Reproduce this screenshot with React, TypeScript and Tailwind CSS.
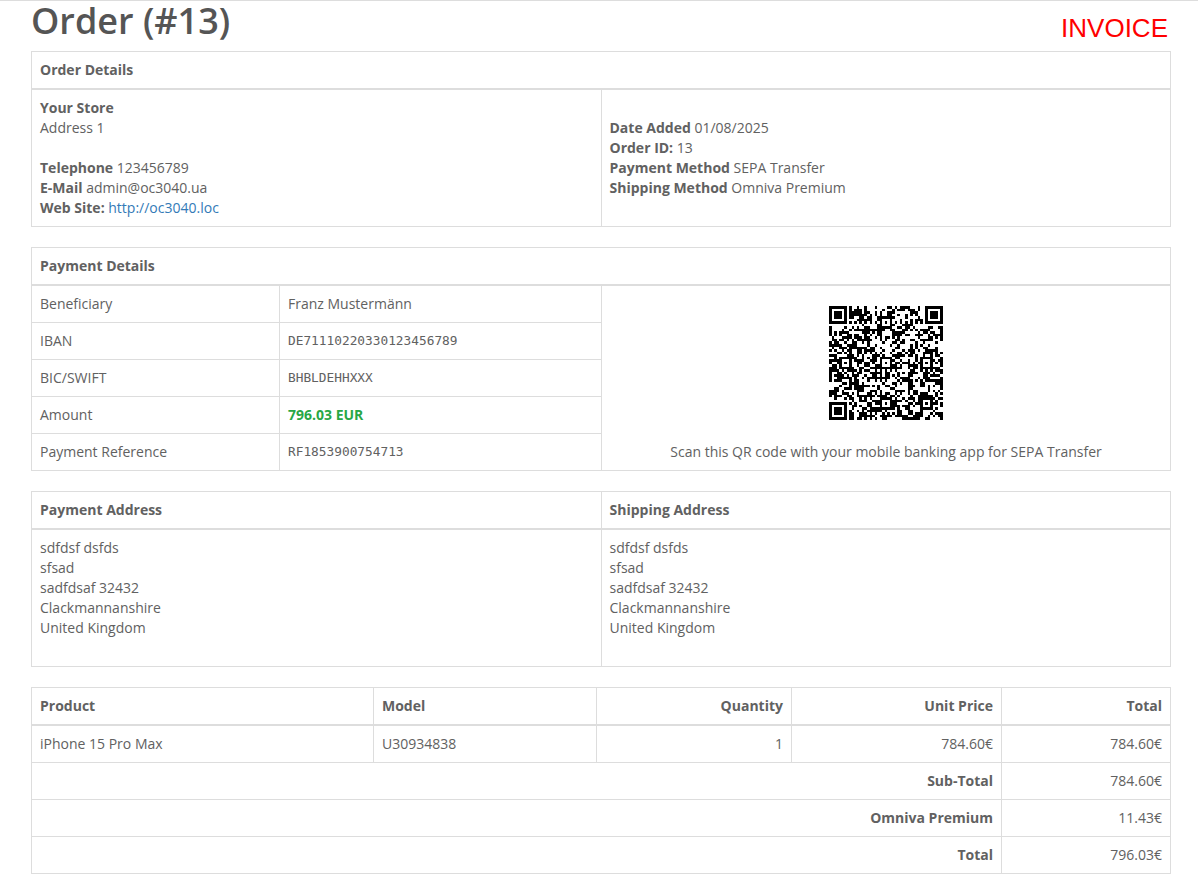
const SIZE = 45;

// Scannable look only: finder, timing and alignment patterns are real, the data area is filler
function buildQr() {
  const grid: boolean[][] = [];
  let seed = 20250108;
  for (let y = 0; y < SIZE; y++) {
    const row: boolean[] = [];
    for (let x = 0; x < SIZE; x++) {
      seed = (seed * 1664525 + 1013904223) >>> 0;
      row.push((seed >>> 16) % 100 < 50);
    }
    grid.push(row);
  }
  const finder = (ox: number, oy: number) => {
    for (let y = -1; y < 8; y++) {
      for (let x = -1; x < 8; x++) {
        const px = ox + x;
        const py = oy + y;
        if (px < 0 || py < 0 || px >= SIZE || py >= SIZE) continue;
        const inside = x >= 0 && x <= 6 && y >= 0 && y <= 6;
        const ring = x === 0 || x === 6 || y === 0 || y === 6;
        const core = x >= 2 && x <= 4 && y >= 2 && y <= 4;
        grid[py][px] = inside && (ring || core);
      }
    }
  };
  finder(0, 0);
  finder(SIZE - 7, 0);
  finder(0, SIZE - 7);
  for (let i = 8; i < SIZE - 8; i++) {
    grid[6][i] = i % 2 === 0;
    grid[i][6] = i % 2 === 0;
  }
  const centers = [6, 22, 38];
  for (const cy of centers) {
    for (const cx of centers) {
      if ((cx === 6 && cy === 6) || (cx === 38 && cy === 6) || (cx === 6 && cy === 38)) continue;
      for (let y = -2; y <= 2; y++) {
        for (let x = -2; x <= 2; x++) {
          grid[cy + y][cx + x] = Math.max(Math.abs(x), Math.abs(y)) !== 1;
        }
      }
    }
  }
  let d = "";
  grid.forEach((row, y) =>
    row.forEach((on, x) => {
      if (on) d += `M${x} ${y}h1v1h-1z`;
    })
  );
  return d;
}

const qrPath = buildQr();

const cell = "border border-[#ddd] p-2 align-top";
const head = "border border-[#ddd] border-b-2 p-2 align-top font-bold text-left";
const mono = "font-['DejaVu_Sans_Mono',monospace] text-[12.8px]";

const address = ["sdfdsf dsfds", "sfsad", "sadfdsaf 32432", "Clackmannanshire", "United Kingdom"];

function AddressLines() {
  return (
    <>
      {address.map((line) => (
        <div key={line}>{line}</div>
      ))}
      <br />
    </>
  );
}

export default function App() {
  return (
    <div className="min-h-[882px] border-t border-[#ddd] bg-white pr-[27px] pb-2 pl-[31px] font-['Open_Sans',sans-serif] text-[14px] leading-5 text-[#616161]">
      {/* Header */}
      <div className="flex h-[50px] items-start justify-between">
        <h1 className="text-[36px] leading-10 font-semibold text-[#555]">Order (#13)</h1>
        <div className="mt-3 mr-[3px] font-['Liberation_Sans',Arial,sans-serif] text-[26px] leading-[30px] text-[#ff0000]">
          INVOICE
        </div>
      </div>

      {/* Order Details */}
      <table className="mb-5 w-full table-fixed border-collapse">
        <thead>
          <tr>
            <th colSpan={2} className={head}>
              Order Details
            </th>
          </tr>
        </thead>
        <tbody>
          <tr>
            <td className={`${cell} w-1/2`}>
              <b>Your Store</b>
              <br />
              Address 1
              <br />
              <br />
              <b>Telephone</b> 123456789
              <br />
              <b>E-Mail</b> admin@oc3040.ua
              <br />
              <b>Web Site:</b> <a className="text-[#337ab7]">http://oc3040.loc</a>
            </td>
            <td className={`${cell} w-1/2`}>
              <br />
              <b>Date Added</b> 01/08/2025
              <br />
              <b>Order ID:</b> 13
              <br />
              <b>Payment Method</b> SEPA Transfer
              <br />
              <b>Shipping Method</b> Omniva Premium
            </td>
          </tr>
        </tbody>
      </table>

      {/* Payment Details */}
      <table className="mb-5 w-full table-fixed border-collapse">
        <colgroup>
          <col className="w-[248px]" />
          <col className="w-[322px]" />
          <col />
        </colgroup>
        <thead>
          <tr>
            <th colSpan={3} className={head}>
              Payment Details
            </th>
          </tr>
        </thead>
        <tbody>
          <tr>
            <td className={cell}>Beneficiary</td>
            <td className={cell}>Franz Mustermänn</td>
            <td rowSpan={5} className={`${cell} text-center`}>
              <svg
                viewBox={`0 0 ${SIZE} ${SIZE}`}
                shapeRendering="crispEdges"
                className="mx-auto mt-3 mb-[22px] h-[114px] w-[114px]"
              >
                <path d={qrPath} fill="#000" />
              </svg>
              <div>Scan this QR code with your mobile banking app for SEPA Transfer</div>
            </td>
          </tr>
          <tr>
            <td className={cell}>IBAN</td>
            <td className={`${cell} ${mono}`}>DE71110220330123456789</td>
          </tr>
          <tr>
            <td className={cell}>BIC/SWIFT</td>
            <td className={`${cell} ${mono}`}>BHBLDEHHXXX</td>
          </tr>
          <tr>
            <td className={cell}>Amount</td>
            <td className={`${cell} font-bold text-[#28a745]`}>796.03 EUR</td>
          </tr>
          <tr>
            <td className={cell}>Payment Reference</td>
            <td className={`${cell} ${mono}`}>RF1853900754713</td>
          </tr>
        </tbody>
      </table>

      {/* Addresses */}
      <table className="mb-5 w-full table-fixed border-collapse">
        <thead>
          <tr>
            <th className={head}>Payment Address</th>
            <th className={head}>Shipping Address</th>
          </tr>
        </thead>
        <tbody>
          <tr>
            <td className={cell}>
              <AddressLines />
            </td>
            <td className={cell}>
              <AddressLines />
            </td>
          </tr>
        </tbody>
      </table>

      {/* Products */}
      <table className="w-full table-fixed border-collapse">
        <colgroup>
          <col className="w-[342px]" />
          <col className="w-[223px]" />
          <col className="w-[195px]" />
          <col className="w-[210px]" />
          <col />
        </colgroup>
        <thead>
          <tr>
            <th className={head}>Product</th>
            <th className={head}>Model</th>
            <th className={`${head} text-right`}>Quantity</th>
            <th className={`${head} text-right`}>Unit Price</th>
            <th className={`${head} text-right`}>Total</th>
          </tr>
        </thead>
        <tbody>
          <tr>
            <td className={cell}>iPhone 15 Pro Max</td>
            <td className={cell}>U30934838</td>
            <td className={`${cell} text-right`}>1</td>
            <td className={`${cell} text-right`}>784.60€</td>
            <td className={`${cell} text-right`}>784.60€</td>
          </tr>
          {[
            { label: "Sub-Total", value: "784.60€" },
            { label: "Omniva Premium", value: "11.43€" },
            { label: "Total", value: "796.03€" },
          ].map((row) => (
            <tr key={row.label}>
              <td colSpan={4} className={`${cell} text-right font-bold`}>
                {row.label}
              </td>
              <td className={`${cell} text-right`}>{row.value}</td>
            </tr>
          ))}
        </tbody>
      </table>
    </div>
  );
}
